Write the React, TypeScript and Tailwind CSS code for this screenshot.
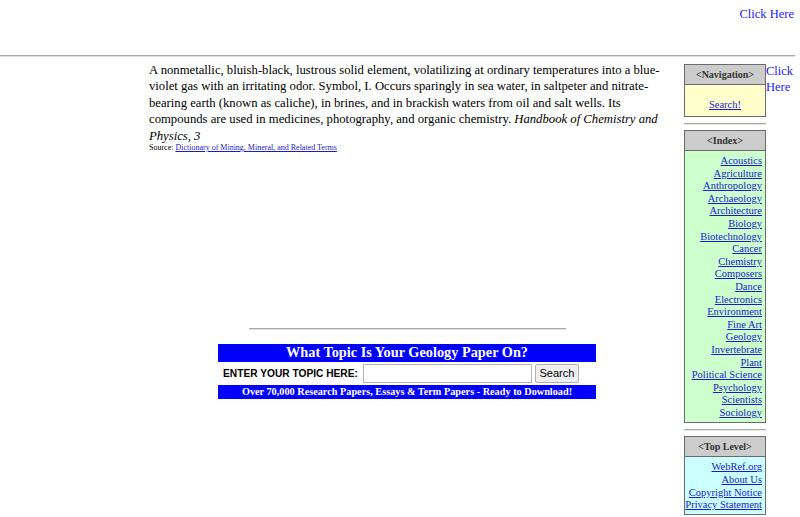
import React from "react";

const serif = "font-['Liberation_Serif','Times_New_Roman',serif]";

const indexLinks: string[] = [
  "Acoustics",
  "Agriculture",
  "Anthropology",
  "Archaeology",
  "Architecture",
  "Biology",
  "Biotechnology",
  "Cancer",
  "Chemistry",
  "Composers",
  "Dance",
  "Electronics",
  "Environment",
  "Fine Art",
  "Geology",
  "Invertebrate",
  "Plant",
  "Political Science",
  "Psychology",
  "Scientists",
  "Sociology",
];

const topLinks: string[] = ["WebRef.org", "About Us", "Copyright Notice", "Privacy Statement"];

function SideBox({
  title,
  bodyClass,
  children,
}: {
  title: string;
  bodyClass: string;
  children: React.ReactNode;
}) {
  return (
    <div className="border border-[#6b6b6b]">
      <div className="flex h-[19px] items-center justify-center bg-[#cccccc] text-[10px] font-bold text-[#333]">
        {title}
      </div>
      <div className={`border-t border-[#6b6b6b] ${bodyClass}`}>{children}</div>
    </div>
  );
}

export default function App() {
  return (
    <div className={`relative h-[517px] w-[800px] overflow-hidden bg-white text-black ${serif}`}>
      <div className="flex h-[55px] justify-end pr-[6px] pt-[5px]">
        <a className="text-[12.5px] leading-[18px] text-[#1a1aff]">Click Here</a>
      </div>
      <div className="h-[2px] w-[795px] border-t border-[#a8a8a8] bg-[#e0e0e0]" />

      <div className="flex">
        <div className="w-[149px] shrink-0" />

        <main className="w-[516px] shrink-0 pt-[5px]">
          <p className="text-[12.7px] leading-[16.4px]">
            A nonmetallic, bluish-black, lustrous solid element, volatilizing at ordinary temperatures into a
            blue-violet gas with an irritating odor. Symbol, I. Occurs sparingly in sea water, in saltpeter and
            nitrate-bearing earth (known as caliche), in brines, and in brackish waters from oil and salt wells. Its
            compounds are used in medicines, photography, and organic chemistry.{" "}
            <i>Handbook of Chemistry and Physics, 3</i>
          </p>
          <p className="text-[8px] leading-[8px]">
            Source:{" "}
            <a className="text-[#1a1acc] underline">Dictionary of Mining, Mineral, and Related Terms</a>
          </p>

          <div className="mt-[176px] flex flex-col items-center">
            <div className="h-[2px] w-[317px] border-t border-[#a8a8a8] bg-[#e0e0e0]" />
            <div className="mt-[14px] w-[378px]">
              <div className="flex h-[18px] items-center justify-center bg-[#0000ff] text-[14.3px] font-bold text-white">
                What Topic Is Your Geology Paper On?
              </div>
              <div className="flex h-[23px] items-center pl-[5px]">
                <span className="font-['Liberation_Sans',Arial,sans-serif] text-[10.2px] font-bold">
                  ENTER YOUR TOPIC HERE:
                </span>
                <input
                  type="text"
                  className="ml-[5px] h-[19px] w-[169px] border border-[#b5b5b5] bg-white"
                />
                <button
                  type="button"
                  className="ml-[3px] h-[19px] w-[44px] rounded-[2px] border border-[#b0b0b0] bg-[#efefef] font-['Liberation_Sans',Arial,sans-serif] text-[11px]"
                >
                  Search
                </button>
              </div>
              <div className="flex h-[14px] items-center justify-center bg-[#0000ff] text-[10.25px] font-bold text-white">
                Over 70,000 Research Papers, Essays &amp; Term Papers - Ready to Download!
              </div>
            </div>
          </div>
        </main>

        <div className="w-[19px] shrink-0" />

        <aside className="w-[82px] shrink-0 pt-[7px]">
          <SideBox title="<Navigation>" bodyClass="h-[32px] bg-[#ffffcc] flex items-end justify-center pb-[4px]">
            <a className="text-[10.5px] leading-[12.6px] text-[#1a1acc] underline">Search!</a>
          </SideBox>
          <div className="mb-[5px] mt-[6px] h-[2px] border-t border-[#aaa] bg-[#e4e4e4]" />
          <SideBox title="<Index>" bodyClass="bg-[#ccffcc] pt-[4px] pb-[3px] pr-[3px] text-right">
            {indexLinks.map((l) => (
              <div key={l} className="text-[10.5px] leading-[12.6px]">
                <a className="text-[#1a1acc] underline">{l}</a>
              </div>
            ))}
          </SideBox>
          <div className="mb-[5px] mt-[6px] h-[2px] border-t border-[#aaa] bg-[#e4e4e4]" />
          <SideBox title="<Top Level>" bodyClass="bg-[#ccffff] pt-[4px] pb-[2px] pr-[3px] text-right">
            {topLinks.map((l) => (
              <div key={l} className="text-[10.5px] leading-[12.6px]">
                <a className="text-[#1a1acc] underline">{l}</a>
              </div>
            ))}
          </SideBox>
        </aside>

        <div className="pt-[6px]">
          <a className="block text-[12.5px] leading-[16px] text-[#1a1aff]">
            Click
            <br />
            Here
          </a>
        </div>
      </div>
    </div>
  );
}
